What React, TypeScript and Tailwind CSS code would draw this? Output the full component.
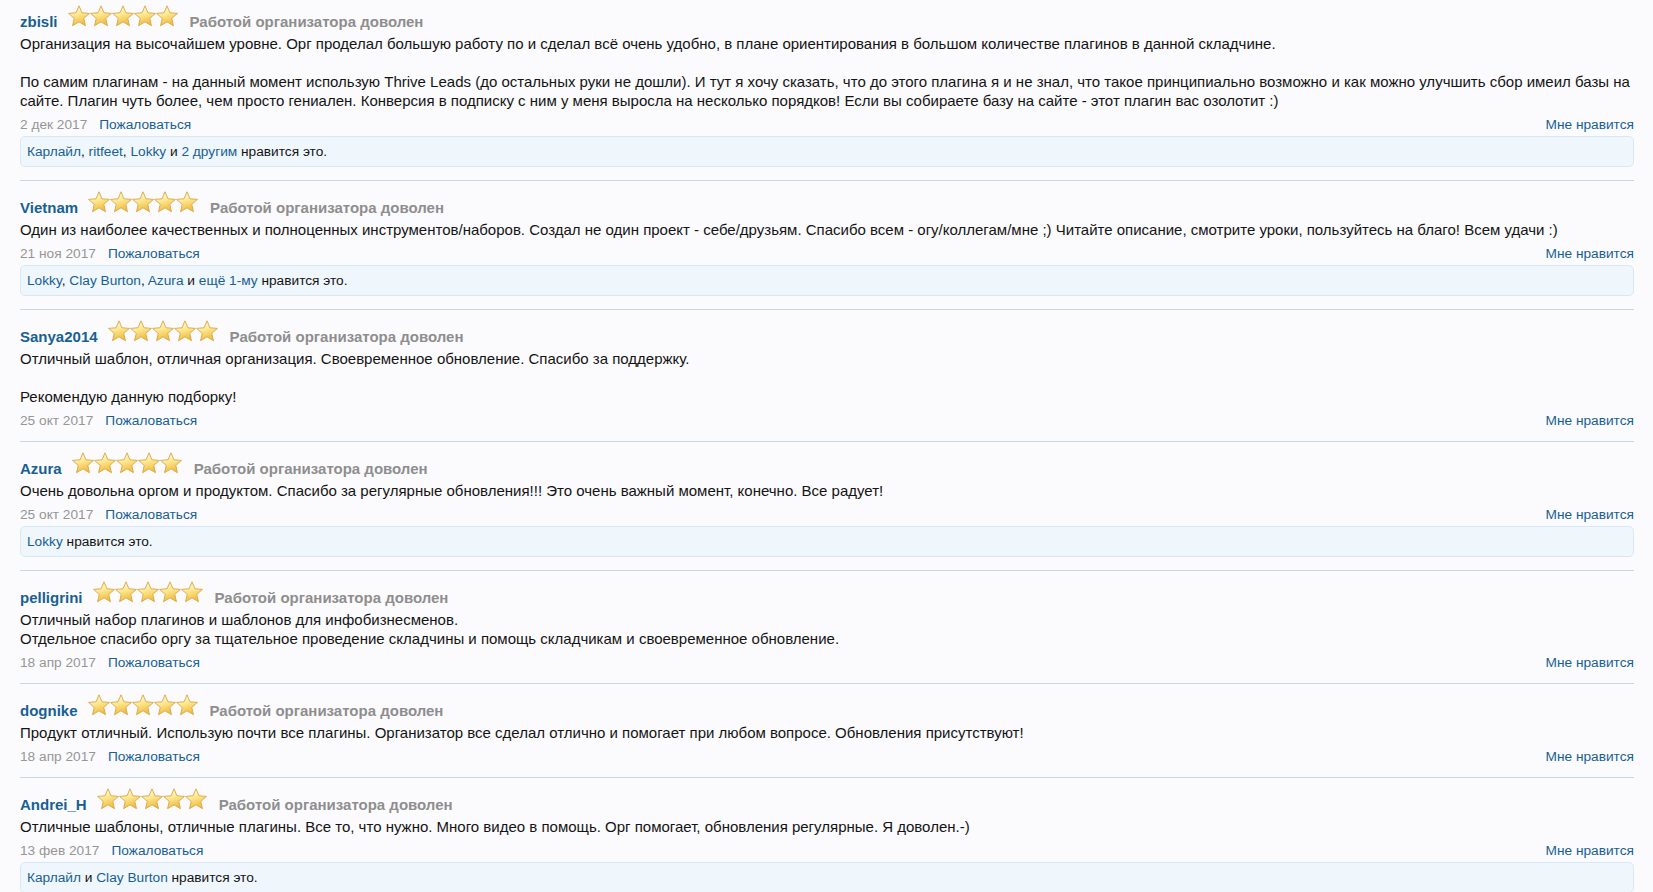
import React from "react";

type Review = {
  name: string;
  body: string[];
  date: string;
  likes?: React.ReactNode;
};

const L = ({ children }: { children: React.ReactNode }) => (
  <a href="#" className="text-[#176093]">
    {children}
  </a>
);

const reviews: Review[] = [
  {
    name: "zbisli",
    body: [
      "Организация на высочайшем уровне. Орг проделал большую работу по и сделал всё очень удобно, в плане ориентирования в большом количестве плагинов в данной складчине.",
      "",
      "По самим плагинам - на данный момент использую Thrive Leads (до остальных руки не дошли). И тут я хочу сказать, что до этого плагина я и не знал, что такое принципиально возможно и как можно улучшить сбор имеил базы на сайте. Плагин чуть более, чем просто гениален. Конверсия в подписку с ним у меня выросла на несколько порядков! Если вы собираете базу на сайте - этот плагин вас озолотит :)",
    ],
    date: "2 дек 2017",
    likes: (
      <>
        <L>Карлайл</L>, <L>ritfeet</L>, <L>Lokky</L> и <L>2 другим</L> нравится это.
      </>
    ),
  },
  {
    name: "Vietnam",
    body: [
      "Один из наиболее качественных и полноценных инструментов/наборов. Создал не один проект - себе/друзьям. Спасибо всем - огу/коллегам/мне ;) Читайте описание, смотрите уроки, пользуйтесь на благо! Всем удачи :)",
    ],
    date: "21 ноя 2017",
    likes: (
      <>
        <L>Lokky</L>, <L>Clay Burton</L>, <L>Azura</L> и <L>ещё 1-му</L> нравится это.
      </>
    ),
  },
  {
    name: "Sanya2014",
    body: [
      "Отличный шаблон, отличная организация. Своевременное обновление. Спасибо за поддержку.",
      "",
      "Рекомендую данную подборку!",
    ],
    date: "25 окт 2017",
  },
  {
    name: "Azura",
    body: [
      "Очень довольна оргом и продуктом. Спасибо за регулярные обновления!!! Это очень важный момент, конечно. Все радует!",
    ],
    date: "25 окт 2017",
    likes: (
      <>
        <L>Lokky</L> нравится это.
      </>
    ),
  },
  {
    name: "pelligrini",
    body: [
      "Отличный набор плагинов и шаблонов для инфобизнесменов.",
      "Отдельное спасибо оргу за тщательное проведение складчины и помощь складчикам и своевременное обновление.",
    ],
    date: "18 апр 2017",
  },
  {
    name: "dognike",
    body: [
      "Продукт отличный. Использую почти все плагины. Организатор все сделал отлично и помогает при любом вопросе. Обновления присутствуют!",
    ],
    date: "18 апр 2017",
  },
  {
    name: "Andrei_H",
    body: [
      "Отличные шаблоны, отличные плагины. Все то, что нужно. Много видео в помощь. Орг помогает, обновления регулярные. Я доволен.-)",
    ],
    date: "13 фев 2017",
    likes: (
      <>
        <L>Карлайл</L> и <L>Clay Burton</L> нравится это.
      </>
    ),
  },
];

function starPoints(cx: number, cy: number, ro: number, ri: number) {
  const pts: string[] = [];
  for (let i = 0; i < 10; i++) {
    const r = i % 2 === 0 ? ro : ri;
    const a = (Math.PI / 5) * i - Math.PI / 2;
    pts.push(`${(cx + r * Math.cos(a)).toFixed(2)},${(cy + r * Math.sin(a)).toFixed(2)}`);
  }
  return pts.join(" ");
}

function Stars() {
  return (
    <svg width="110" height="22" viewBox="0 0 110 22" className="shrink-0">
      <defs>
        <linearGradient id="starFill" x1="0" y1="0" x2="0.3" y2="1">
          <stop offset="0" stopColor="#fffce8" />
          <stop offset="0.5" stopColor="#fde994" />
          <stop offset="1" stopColor="#f0bd40" />
        </linearGradient>
      </defs>
      {[0, 1, 2, 3, 4].map((i) => (
        <polygon
          key={i}
          points={starPoints(11 + i * 22, 11.8, 11, 5)}
          fill="url(#starFill)"
          stroke="#d8a64a"
          strokeWidth="0.9"
          strokeLinejoin="round"
        />
      ))}
    </svg>
  );
}

export default function App() {
  return (
    <div
      className="min-h-screen bg-[#fbfbfd] pl-[20px] pr-[19px] text-[15px] leading-[19px] text-[#141414]"
      style={{ fontFamily: "'Liberation Sans', Arial, sans-serif" }}
    >
      <ol>
        {reviews.map((r) => (
          <li
            key={r.name}
            className="border-t border-[#c9d7e4] pt-[10px] pb-[11px] first:border-t-0 first:pt-[5px]"
          >
            <div className="flex items-baseline">
              <a href="#" className="font-bold text-[#176093]">
                {r.name}
              </a>
              <span className="ml-[10px] mr-[12px]">
                <Stars />
              </span>
              <span className="font-bold text-[#8e8e8e]">Работой организатора доволен</span>
            </div>
            <div className="mt-[3px]">
              {r.body.map((p, i) => (
                <div key={i}>{p === "" ? <br /> : p}</div>
              ))}
            </div>
            <div className="mt-[5px] flex items-center justify-between text-[13.7px]">
              <div>
                <span className="text-[#969696]">{r.date}</span>
                <a href="#" className="ml-[12px] text-[#176093]">
                  Пожаловаться
                </a>
              </div>
              <a href="#" className="text-[#176093]">
                Мне нравится
              </a>
            </div>
            {r.likes && (
              <div className="mt-[2px] mb-[2px] rounded-[5px] border border-[#d7e8f6] bg-[#f0f7fc] px-[6px] py-[5px] text-[13.7px] leading-[19px]">
                {r.likes}
              </div>
            )}
          </li>
        ))}
      </ol>
    </div>
  );
}
